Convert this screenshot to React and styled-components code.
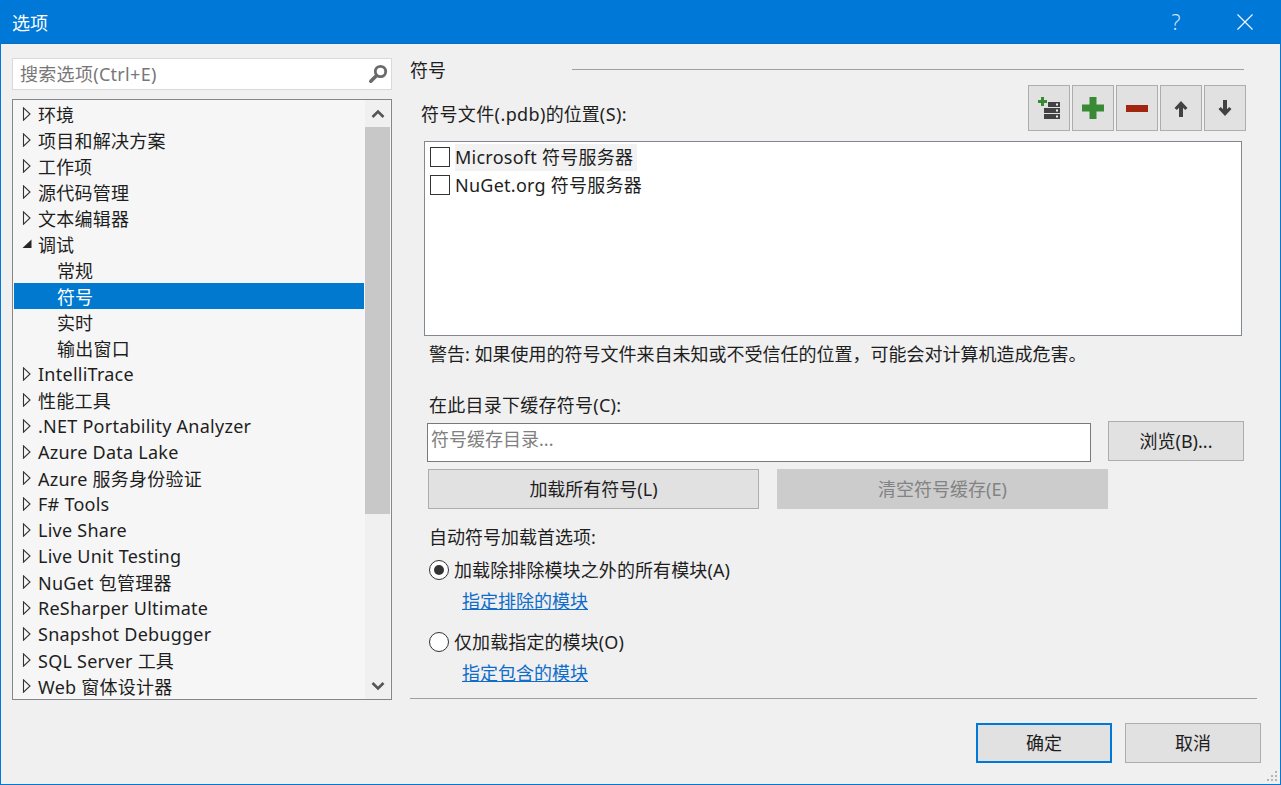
import React from "react";
import styled, { createGlobalStyle } from "styled-components";

const treeItems = [
  { label: "环境" },
  { label: "项目和解决方案" },
  { label: "工作项" },
  { label: "源代码管理" },
  { label: "文本编辑器" },
  { label: "调试", expanded: true },
  { label: "常规", child: true },
  { label: "符号", child: true, selected: true },
  { label: "实时", child: true },
  { label: "输出窗口", child: true },
  { label: "IntelliTrace" },
  { label: "性能工具" },
  { label: ".NET Portability Analyzer" },
  { label: "Azure Data Lake" },
  { label: "Azure 服务身份验证" },
  { label: "F# Tools" },
  { label: "Live Share" },
  { label: "Live Unit Testing" },
  { label: "NuGet 包管理器" },
  { label: "ReSharper Ultimate" },
  { label: "Snapshot Debugger" },
  { label: "SQL Server 工具" },
  { label: "Web 窗体设计器" },
];

const Mixed = ({ text }) =>
  text.split(/([\x20-\x7e]+)/).map((part, i) =>
    part.length > 3 ? <Latin key={i}>{part}</Latin> : part
  );

const Arrow = ({ expanded }) =>
  expanded ? (
    <svg width="10" height="14" viewBox="0 0 10 14">
      <path d="M0.5 11 L9.5 11 L9.5 2.5 Z" fill="#262626" />
    </svg>
  ) : (
    <svg width="10" height="14" viewBox="0 0 10 14">
      <path d="M1.5 0.8 L8 7 L1.5 13.2 Z" fill="none" stroke="#333" strokeWidth="1.1" />
    </svg>
  );

const SearchIcon = () => (
  <svg width="20" height="20" viewBox="0 0 20 20">
    <circle cx="12.5" cy="7.5" r="5.2" fill="none" stroke="#6a6a6a" strokeWidth="2.8" />
    <path d="M8.600 11.400 L2.800 17.200" stroke="#6a6a6a" strokeWidth="3.6" strokeLinecap="round" />
  </svg>
);

const AddServerIcon = () => (
  <svg width="22" height="22" viewBox="0 0 22 22">
    <path d="M3 0h3v3h3v3H6v3H3V6H0V3h3z" fill="#388a34" />
    <rect x="10" y="5" width="12" height="5" fill="#424242" />
    <rect x="6" y="11" width="16" height="5" fill="#424242" />
    <rect x="6" y="17" width="16" height="5" fill="#424242" />
    <rect x="18" y="6.500" width="2" height="2" fill="#f0f0f0" />
    <rect x="18" y="12.500" width="2" height="2" fill="#f0f0f0" />
    <rect x="18" y="18.500" width="2" height="2" fill="#f0f0f0" />
  </svg>
);

const PlusIcon = () => (
  <svg width="22" height="22" viewBox="0 0 22 22">
    <path d="M7.500 0h7v7.500H22v7h-7.500V22h-7v-7.500H0v-7h7.500z" fill="#388a34" />
  </svg>
);

const MinusIcon = () => (
  <svg width="22" height="22" viewBox="0 0 22 22">
    <rect x="0" y="8" width="22" height="7" fill="#a1260d" />
  </svg>
);

const UpIcon = () => (
  <svg width="16" height="18" viewBox="0 0 16 18">
    <path d="M8 2 L14.500 9 L12.200 11 L10 8.700 V18 H6 V8.700 L3.800 11 L1.500 9 Z" fill="#424242" />
  </svg>
);

const DownIcon = () => (
  <svg width="16" height="18" viewBox="0 0 16 18">
    <path d="M8 17 L14.500 10 L12.200 8 L10 10.300 V1 H6 V10.300 L3.800 8 L1.500 10 Z" fill="#424242" />
  </svg>
);

const Chevron = ({ down }) => (
  <svg width="14" height="10" viewBox="0 0 14 10">
    <path
      d={down ? "M1.500 2 L7 7.500 L12.500 2" : "M1.500 8 L7 2.500 L12.500 8"}
      fill="none"
      stroke="#555"
      strokeWidth="2.6"
    />
  </svg>
);

const App = () => {
  return (
    <Window>
      <GlobalStyle />
      <TitleBar>
        <Title>选项</Title>
        <HelpButton>?</HelpButton>
        <CloseButton aria-label="关闭">
          <svg width="16" height="16" viewBox="0 0 16 16">
            <path d="M0.500 0.500 L15.500 15.500 M15.500 0.500 L0.500 15.500" stroke="#fff" strokeWidth="1.1" />
          </svg>
        </CloseButton>
      </TitleBar>

      <Content>
        <LeftColumn>
          <SearchBox>
            <SearchInput placeholder="搜索选项(Ctrl+E)" />
            <SearchIcon />
          </SearchBox>
          <Tree>
            <TreeList>
              {treeItems.map((item) => (
                <TreeRow key={item.label} $child={item.child} $selected={item.selected}>
                  {!item.child && (
                    <ArrowSlot>
                      <Arrow expanded={item.expanded} />
                    </ArrowSlot>
                  )}
                  <span>
                    <Mixed text={item.label} />
                  </span>
                </TreeRow>
              ))}
            </TreeList>
            <ScrollBar>
              <ScrollButton>
                <Chevron />
              </ScrollButton>
              <ScrollThumb />
              <ScrollTrack />
              <ScrollButton>
                <Chevron down />
              </ScrollButton>
            </ScrollBar>
          </Tree>
        </LeftColumn>

        <RightColumn>
          <GroupHeading>
            <HeadingText>符号</HeadingText>
            <HeadingLine />
          </GroupHeading>

          <LocationHeader>
            <LocationLabel>
              <Mixed text="符号文件(.pdb)的位置(S):" />
            </LocationLabel>
            <Toolbar>
              <ToolButton><AddServerIcon /></ToolButton>
              <ToolButton><PlusIcon /></ToolButton>
              <ToolButton><MinusIcon /></ToolButton>
              <ToolButton><UpIcon /></ToolButton>
              <ToolButton><DownIcon /></ToolButton>
            </Toolbar>
          </LocationHeader>

          <ServerList>
            <ServerRow>
              <CheckBox />
              <ServerName $hover>
                <Mixed text="Microsoft 符号服务器" />
              </ServerName>
            </ServerRow>
            <ServerRow>
              <CheckBox />
              <ServerName>
                <Mixed text="NuGet.org 符号服务器" />
              </ServerName>
            </ServerRow>
          </ServerList>

          <Warning>警告: 如果使用的符号文件来自未知或不受信任的位置，可能会对计算机造成危害。</Warning>

          <CacheLabel>
            <Mixed text="在此目录下缓存符号(C):" />
          </CacheLabel>
          <CacheRow>
            <CacheInput placeholder="符号缓存目录..." />
            <BrowseButton>浏览(B)...</BrowseButton>
          </CacheRow>
          <ActionRow>
            <ActionButton>加载所有符号(L)</ActionButton>
            <ActionButton disabled>清空符号缓存(E)</ActionButton>
          </ActionRow>

          <PrefsLabel>自动符号加载首选项:</PrefsLabel>
          <RadioRow>
            <Radio $checked />
            <RadioLabel>加载除排除模块之外的所有模块(A)</RadioLabel>
          </RadioRow>
          <ModuleLink href="#">指定排除的模块</ModuleLink>
          <RadioRow $spaced>
            <Radio />
            <RadioLabel>仅加载指定的模块(O)</RadioLabel>
          </RadioRow>
          <ModuleLink href="#">指定包含的模块</ModuleLink>
          <Separator />
        </RightColumn>
      </Content>

      <Footer>
        <DialogButton $primary>确定</DialogButton>
        <DialogButton>取消</DialogButton>
        <ResizeGrip width="13" height="11" viewBox="0 0 13 11">
          <path
            d="M10 0h2v2h-2zM10 4h2v2h-2zM6 4h2v2H6zM10 8h2v2h-2zM6 8h2v2H6zM2 8h2v2H2z"
            fill="#b4b4b4"
          />
        </ResizeGrip>
      </Footer>
    </Window>
  );
};

export default App;

const fontStack = `"Segoe UI", "Noto Sans", "Noto Sans CJK SC", sans-serif`;

const GlobalStyle = createGlobalStyle`
  html, body {
    margin: 0;
    padding: 0;
    background: #f0f0f0;
  }
  * {
    box-sizing: border-box;
  }
`;

const Latin = styled.span`
  letter-spacing: 0.25px;
`;

const Window = styled.div`
  position: relative;
  width: 1281px;
  height: 785px;
  display: flex;
  flex-direction: column;
  overflow: hidden;
  background: #f0f0f0;
  border: 1px solid #0078d7;
  border-top: none;
  font-family: ${fontStack};
  font-size: 18px;
  color: #1e1e1e;
`;

const TitleBar = styled.div`
  height: 44px;
  flex: none;
  display: flex;
  align-items: center;
  padding-left: 11px;
  background: #0078d7;
  border-bottom: 1px solid #0a6cc0;
  color: #fff;
`;

const Title = styled.div`
  flex: 1;
  font-size: 18px;
`;

const HelpButton = styled.div`
  width: 16px;
  margin-right: 53px;
  font-size: 21px;
  font-weight: 300;
  text-align: center;
  color: #cfe4f7;
`;

const CloseButton = styled.div`
  display: flex;
  margin-right: 27px;
`;

const Content = styled.div`
  height: 656px;
  flex: none;
  display: flex;
  padding: 14px 23px 0 11px;
`;

const LeftColumn = styled.div`
  width: 380px;
  flex: none;
  display: flex;
  flex-direction: column;
  gap: 9px;
`;

const SearchBox = styled.div`
  height: 32px;
  display: flex;
  align-items: center;
  padding: 0 3px 0 7px;
  background: #fff;
  border: 1px solid #d9d9d9;
`;

const SearchInput = styled.input`
  flex: 1;
  min-width: 0;
  border: none;
  outline: none;
  padding: 0;
  background: transparent;
  font: inherit;
  color: inherit;

  &::placeholder {
    color: #777;
    opacity: 1;
    letter-spacing: 0.3px;
  }
`;

const Tree = styled.div`
  height: 601px;
  display: flex;
  background: #f6f6f6;
  border: 1px solid #82878c;
`;

const TreeList = styled.div`
  flex: 1;
  min-width: 0;
  padding: 1px 1px 0;
  overflow: hidden;
`;

const TreeRow = styled.div`
  height: 26px;
  display: flex;
  align-items: center;
  padding-left: ${(p) => (p.$child ? "43px" : "8px")};
  white-space: nowrap;
  background: ${(p) => (p.$selected ? "#0079ce" : "transparent")};
  color: ${(p) => (p.$selected ? "#fff" : "inherit")};
`;

const ArrowSlot = styled.span`
  width: 16px;
  flex: none;
  display: flex;
`;

const ScrollBar = styled.div`
  width: 25px;
  flex: none;
  margin-right: 1px;
  display: flex;
  flex-direction: column;
  background: #f0f0f0;
`;

const ScrollButton = styled.div`
  height: 27px;
  flex: none;
  display: flex;
  align-items: center;
  justify-content: center;
`;

const ScrollThumb = styled.div`
  height: 387px;
  flex: none;
  background: #c8c8c8;
`;

const ScrollTrack = styled.div`
  flex: 1;
`;

const RightColumn = styled.div`
  flex: 1;
  min-width: 0;
  margin-left: 18px;
  display: flex;
  flex-direction: column;
`;

const GroupHeading = styled.div`
  height: 24px;
  flex: none;
  display: flex;
  align-items: center;
  padding-right: 13px;
`;

const HeadingText = styled.div`
  width: 162px;
  flex: none;
  padding-bottom: 2px;
`;

const HeadingLine = styled.div`
  flex: 1;
  height: 1px;
  margin-top: -2px;
  background: #a0a0a0;
`;

const LocationHeader = styled.div`
  height: 46px;
  margin-top: 3px;
  flex: none;
  display: flex;
  justify-content: space-between;
  padding: 0 11px;
`;

const LocationLabel = styled.div`
  padding-top: 17px;
  line-height: 24px;

  ${Latin} {
    letter-spacing: 0.4px;
  }
`;

const Toolbar = styled.div`
  display: flex;
  gap: 2px;
`;

const ToolButton = styled.div`
  width: 42px;
  height: 46px;
  display: flex;
  align-items: center;
  justify-content: center;
  background: #e1e1e1;
  border: 1px solid #adadad;
`;

const ServerList = styled.div`
  height: 195px;
  flex: none;
  margin: 10px 15px 0 14px;
  padding: 1px 4px;
  background: #fff;
  border: 1px solid #828790;
`;

const ServerRow = styled.div`
  height: 28px;
  display: flex;
  align-items: center;
  gap: 5px;
`;

const CheckBox = styled.span`
  width: 20px;
  height: 20px;
  flex: none;
  margin-left: 1px;
  background: #fff;
  border: 1px solid #333;
`;

const ServerName = styled.span`
  height: 27px;
  padding-right: 4px;
  line-height: 27px;
  background: ${(p) => (p.$hover ? "#f2f2f2" : "transparent")};
`;

const Warning = styled.div`
  margin: 6px 0 1px 19px;
  line-height: 24px;
  white-space: nowrap;
`;

const CacheLabel = styled.div`
  margin: 26px 0 0 19px;
  line-height: 24px;
`;

const CacheRow = styled.div`
  height: 41px;
  margin: 4px 0 0 17px;
  flex: none;
  display: flex;
  gap: 17px;
`;

const CacheInput = styled.input`
  width: 664px;
  height: 39px;
  margin-top: 2px;
  padding: 0 3px 8px;
  background: #fff;
  border: 1px solid #7a7a7a;
  outline: none;
  font: inherit;

  &::placeholder {
    color: #808080;
    opacity: 1;
  }
`;

const PushButton = styled.button`
  display: block;
  padding: 0 0 2px;
  background: #e1e1e1;
  border: 1px solid #adadad;
  font: inherit;
  color: inherit;
`;

const BrowseButton = styled(PushButton)`
  width: 136px;
  height: 40px;
`;

const ActionRow = styled.div`
  margin: 7px 0 0 18px;
  flex: none;
  display: flex;
  gap: 18px;
`;

const ActionButton = styled(PushButton)`
  width: 331px;
  height: 40px;

  &:disabled {
    background: #cccccc;
    border-color: #cccccc;
    color: #838383;
  }
`;

const PrefsLabel = styled.div`
  margin: 16px 0 1px 19px;
  line-height: 24px;
`;

const RadioRow = styled.div`
  height: 24px;
  margin: ${(p) => (p.$spaced ? "17px" : "8px")} 0 0 19px;
  flex: none;
  display: flex;
  align-items: center;
  gap: 5px;
`;

const Radio = styled.span`
  position: relative;
  width: 20px;
  height: 20px;
  flex: none;
  background: #fff;
  border: 1px solid #333;
  border-radius: 50%;

  &::after {
    content: "";
    display: ${(p) => (p.$checked ? "block" : "none")};
    position: absolute;
    left: 4px;
    top: 4px;
    width: 10px;
    height: 10px;
    border-radius: 50%;
    background: #333;
  }
`;

const RadioLabel = styled.span`
  padding-bottom: 2px;
  letter-spacing: 0.1px;
`;

const ModuleLink = styled.a`
  align-self: flex-start;
  margin: 7px 0 0 52px;
  line-height: 24px;
  color: #0f6cc8;
  text-decoration: underline;
`;

const Separator = styled.div`
  height: 1px;
  flex: none;
  margin-top: auto;
  margin-bottom: 1px;
  background: #a0a0a0;
`;

const Footer = styled.div`
  flex: 1;
  display: flex;
  justify-content: flex-end;
  gap: 13px;
  padding: 23px 19px 0 0;
`;

const DialogButton = styled(PushButton)`
  width: 136px;
  height: 40px;
  border: ${(p) => (p.$primary ? "2px solid #0078d7" : "1px solid #adadad")};
`;

const ResizeGrip = styled.svg`
  position: absolute;
  right: 2px;
  bottom: 2px;
`;
